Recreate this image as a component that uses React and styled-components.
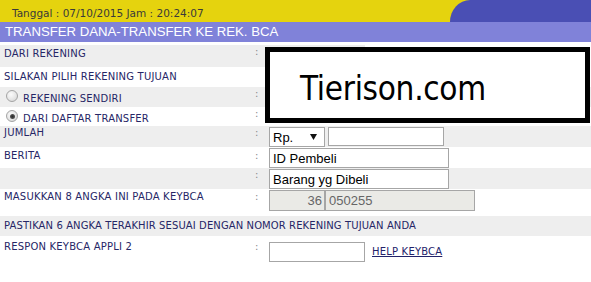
import React from "react";
import styled, { createGlobalStyle } from "styled-components";

const Global = createGlobalStyle`
  html, body { margin: 0; padding: 0; background: #fff; }
  body { font-family: "DejaVu Sans", Verdana, sans-serif; }
`;

const Page = styled.div`
  position: relative;
  width: 591px;
  height: 282px;
  overflow: hidden;
  background: #fff;
`;

const TopBar = styled.div`
  display: flex;
  height: 22px;
  background: #e5d30e;
`;

const DateText = styled.div`
  padding: 7px 0 0 12px;
  font: 10.5px/12px "DejaVu Sans", Verdana, sans-serif;
  color: #3a3a3a;
  white-space: nowrap;
`;

const Swoosh = styled.div`
  margin-left: auto;
  width: 141px;
  background: #4a4fb4;
  border-top-left-radius: 20px 22px;
`;

const TitleBar = styled.div`
  height: 20px;
  line-height: 20px;
  padding-left: 5px;
  background: #8082d9;
  color: #fff;
  font-family: "Liberation Sans", Arial, sans-serif;
  font-size: 13.2px;
  white-space: nowrap;
`;

const Form = styled.div`
  margin-top: 3px;
  display: flex;
  flex-direction: column;
`;

const Row = styled.div`
  display: grid;
  grid-template-columns: 252px 15px 1fr;
  height: ${(p) => p.$h}px;
  background: ${(p) =>
    p.$cut
      ? `linear-gradient(to right, #eeeeee ${p.$cut}px, #ffffff ${p.$cut}px)`
      : p.$shade
      ? "#eeeeee"
      : "#ffffff"};
`;

const WideRow = styled.div`
  display: flex;
  align-items: center;
  height: ${(p) => p.$h}px;
  padding-left: 4px;
  background: #eeeeee;
  font: 10px/12px "DejaVu Sans", Verdana, sans-serif;
  letter-spacing: 0.1px;
  color: #262666;
  white-space: nowrap;
`;

const Label = styled.div`
  padding: ${(p) => p.$pad}px 0 0 4px;
  font: 10px/12px "DejaVu Sans", Verdana, sans-serif;
  letter-spacing: 0.2px;
  color: #262666;
  white-space: nowrap;
`;

const Colon = styled.div`
  padding: ${(p) => p.$pad}px 0 0 3px;
  font: 10px/12px "DejaVu Sans", Verdana, sans-serif;
  color: #8a8a8a;
`;

const Value = styled.div`
  display: flex;
  align-items: ${(p) => (p.$center ? "center" : "flex-start")};
  padding: ${(p) => p.$pad}px 0 0 2px;
  ${(p) => (p.$center ? "height: 20px;" : "")}
`;

const Radio = styled.span`
  display: inline-block;
  position: relative;
  width: 12px;
  height: 12px;
  margin: 0 5px 0 2px;
  box-sizing: border-box;
  border-radius: 50%;
  border: 1px solid #a4a4a4;
  background: radial-gradient(circle at 40% 35%, #fbfbfb 0%, #e6e6e6 55%, #cfcfcf 100%);
  vertical-align: baseline;
  &::after {
    content: "";
    display: ${(p) => (p.$checked ? "block" : "none")};
    position: absolute;
    left: 2.5px;
    top: 2.5px;
    width: 5px;
    height: 5px;
    border-radius: 50%;
    background: radial-gradient(circle, #2a2a2a 0%, #555 70%, #777 100%);
  }
`;

const TextBox = styled.input`
  box-sizing: border-box;
  width: ${(p) => p.$w}px;
  height: ${(p) => p.$h || 20}px;
  margin: 0;
  padding: 0 ${(p) => (p.$right ? 2 : 3)}px;
  border: 1px solid #a6a6a6;
  background: ${(p) => (p.disabled ? "#eaeae6" : "#ffffff")};
  color: ${(p) => (p.disabled ? "#666666" : "#000000")};
  text-align: ${(p) => (p.$right ? "right" : "left")};
  font-family: "Liberation Sans", Arial, sans-serif;
  font-size: 13px;
  outline: none;
`;

const Select = styled.div`
  box-sizing: border-box;
  display: flex;
  align-items: center;
  justify-content: space-between;
  width: 56px;
  height: 20px;
  padding: 0 7px 0 3px;
  margin-right: 3px;
  border: 1px solid #a6a6a6;
  background: #fff;
  font-family: "Liberation Sans", Arial, sans-serif;
  font-size: 13px;
  color: #000;
`;

const HelpLink = styled.a`
  margin-left: 7px;
  font: 10px/12px "DejaVu Sans", Verdana, sans-serif;
  letter-spacing: 0.2px;
  color: #22226a;
  text-decoration: underline;
  cursor: pointer;
`;

const Watermark = styled.div`
  position: absolute;
  left: 265px;
  top: 47px;
  width: 325px;
  height: 76px;
  box-sizing: border-box;
  border: 5px solid #000;
  background: #fff;
  display: flex;
  align-items: center;
  padding: 6px 0 0 30px;
  font-family: "DejaVu Sans Condensed", "DejaVu Sans", sans-serif;
  font-stretch: condensed;
  font-size: 33px;
  color: #000;
  letter-spacing: -0.3px;
`;

const Arrow = () => (
  <svg width="7" height="6" viewBox="0 0 7 6">
    <path d="M0 0 H7 L3.5 6 Z" fill="#111" />
  </svg>
);

export default function App() {
  return (
    <Page>
      <Global />
      <TopBar>
        <DateText>Tanggal : 07/10/2015 Jam : 20:24:07</DateText>
        <Swoosh />
      </TopBar>
      <TitleBar>TRANSFER DANA-TRANSFER KE REK. BCA</TitleBar>
      <Form>
        <Row $h={22} $cut={365}>
          <Label $pad={3}>DARI REKENING</Label>
          <Colon $pad={1}>:</Colon>
          <Value $pad={1} />
        </Row>
        <Row $h={20}>
          <Label $pad={4}>SILAKAN PILIH REKENING TUJUAN</Label>
          <Colon $pad={4} />
          <Value $pad={1} />
        </Row>
        <Row $h={20} $shade>
          <Label $pad={3}>
            <Radio />
            REKENING SENDIRI
          </Label>
          <Colon $pad={1}>:</Colon>
          <Value $pad={1} />
        </Row>
        <Row $h={19}>
          <Label $pad={3}>
            <Radio $checked />
            DARI DAFTAR TRANSFER
          </Label>
          <Colon $pad={1}>:</Colon>
          <Value $pad={1} />
        </Row>
        <Row $h={21} $shade>
          <Label $pad={1}>JUMLAH</Label>
          <Colon $pad={1}>:</Colon>
          <Value $pad={1}>
            <Select>
              <span>Rp.</span>
              <Arrow />
            </Select>
            <TextBox $w={116} $h={19} defaultValue="" />
          </Value>
        </Row>
        <Row $h={21}>
          <Label $pad={3}>BERITA</Label>
          <Colon $pad={3}>:</Colon>
          <Value $pad={1}>
            <TextBox $w={180} defaultValue="ID Pembeli" />
          </Value>
        </Row>
        <Row $h={21} $shade>
          <Label $pad={3} />
          <Colon $pad={1}>:</Colon>
          <Value $pad={1}>
            <TextBox $w={180} defaultValue="Barang yg Dibeli" />
          </Value>
        </Row>
        <Row $h={27}>
          <Label $pad={2}>MASUKKAN 8 ANGKA INI PADA KEYBCA</Label>
          <Colon $pad={2}>:</Colon>
          <Value $pad={1}>
            <TextBox $w={56} $h={21} $right disabled defaultValue="36" />
            <TextBox $w={150} $h={21} disabled defaultValue="050255" />
          </Value>
        </Row>
        <WideRow $h={20}>
          PASTIKAN 6 ANGKA TERAKHIR SESUAI DENGAN NOMOR REKENING TUJUAN ANDA
        </WideRow>
        <Row $h={30}>
          <Label $pad={5}>RESPON KEYBCA APPLI 2</Label>
          <Colon $pad={5}>:</Colon>
          <Value $pad={6} $center>
            <TextBox $w={96} defaultValue="" />
            <HelpLink>HELP KEYBCA</HelpLink>
          </Value>
        </Row>
      </Form>
      <Watermark>Tierison.com</Watermark>
    </Page>
  );
}
